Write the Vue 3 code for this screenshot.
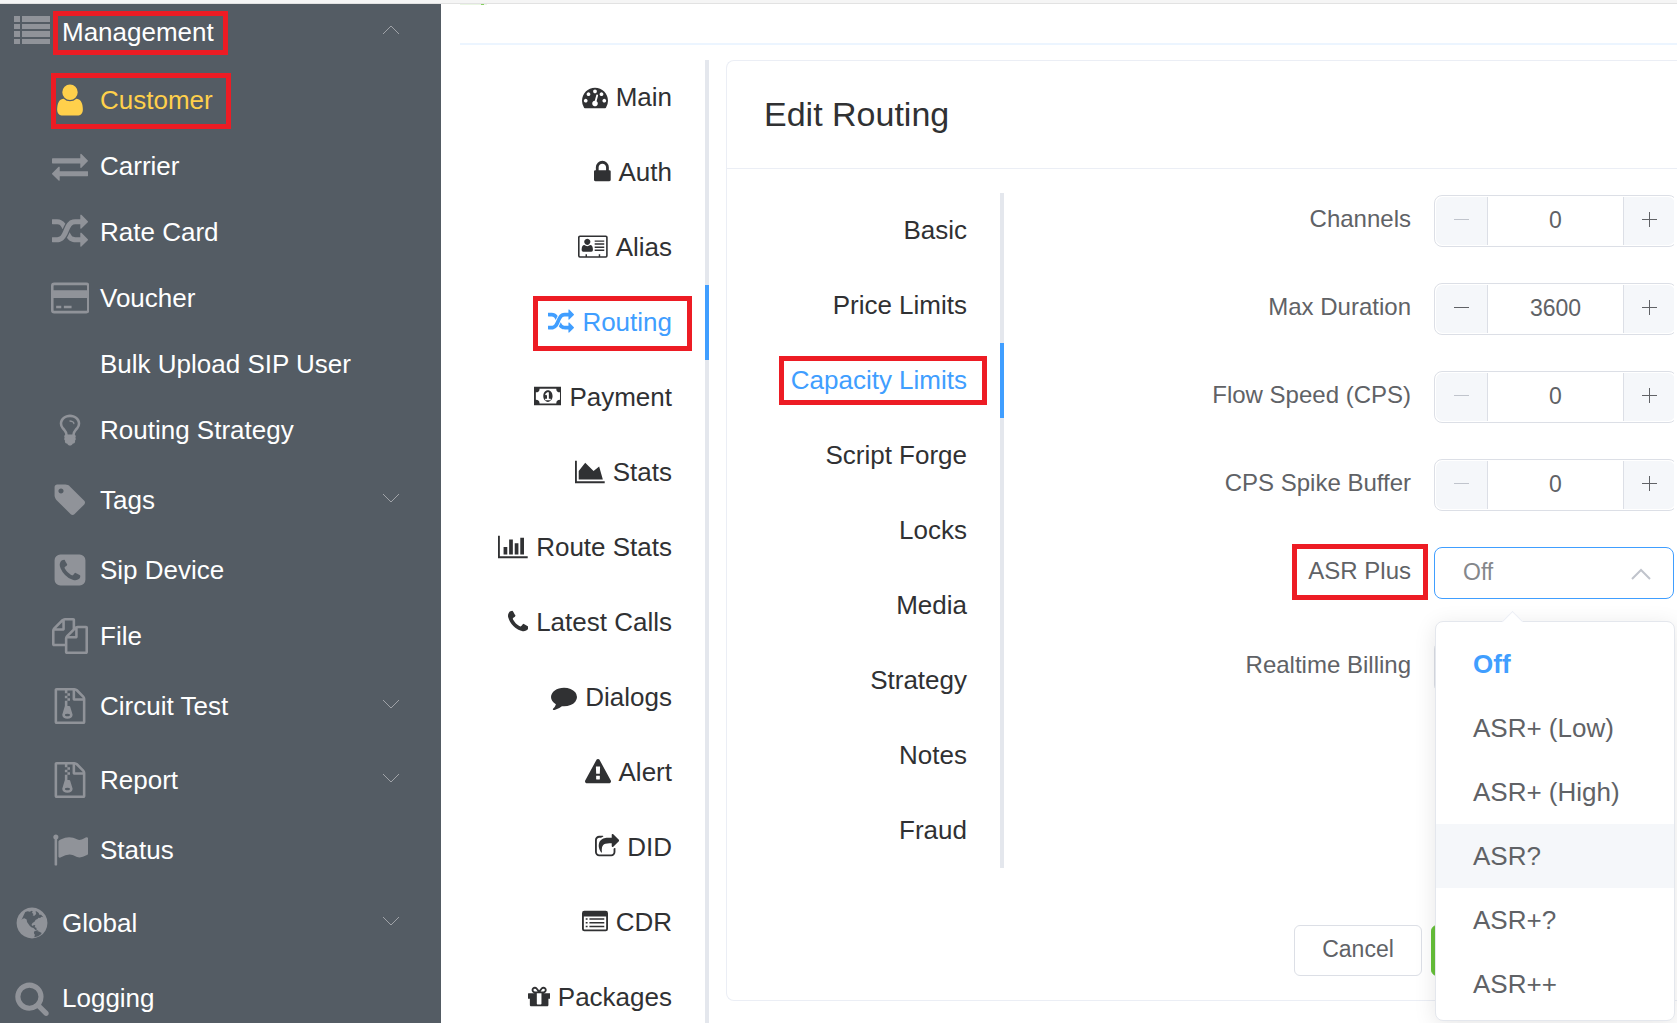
<script setup>
import { ref } from 'vue'

const icons = {
  list: { box: '0 0 36 36', d: 'M0 2h6v6h-6zM8 2h28v6h-28zM0 10h6v5h-6zM8 10h28v5h-28zM0 17h6v6h-6zM8 17h28v6h-28zM0 25h6v5h-6zM8 25h28v5h-28z' },
  user: { box: '0 0 1792 1792', d: 'M1536 1399q0 109-62.5 187t-150.5 78h-854q-88 0-150.5-78t-62.5-187q0-85 8.5-160.5t31.5-152 58.5-131 94-89 134.5-34.5q131 128 313 128t313-128q76 0 134.5 34.5t94 89 58.5 131 31.5 152 8.5 160.5zm-256-887q0 159-112.5 271.5t-271.5 112.5-271.5-112.5-112.5-271.5 112.5-271.5 271.5-112.5 271.5 112.5 112.5 271.5z' },
  exchange: { box: '0 0 1792 1792', d: 'M1792 1184v192q0 13-9.5 22.5t-22.5 9.5h-1376v192q0 13-9.5 22.5t-22.5 9.5q-12 0-24-10l-319-320q-9-9-9-22 0-14 9-23l320-320q9-9 23-9 13 0 22.5 9.5t9.5 22.5v192h1376q13 0 22.5 9.5t9.5 22.5zm0-544q0 14-9 23l-320 320q-9 9-23 9-13 0-22.5-9.5t-9.5-22.5v-192h-1376q-13 0-22.5-9.5t-9.5-22.5v-192q0-13 9.5-22.5t22.5-9.5h1376v-192q0-14 9-23t23-9q12 0 24 10l319 319q9 9 9 23z' },
  random: { box: '0 0 1792 1792', d: 'M666 481q-60 92-137 273-22-45-37-72.5t-40.5-63.5-51-56.5-63-35-81.5-14.5h-224q-14 0-23-9t-9-23v-192q0-14 9-23t23-9h224q250 0 410 225zm1126 799q0 14-9 23l-320 320q-9 9-23 9-13 0-22.5-9.5t-9.5-22.5v-192q-32 0-85 .5t-81 1-73-1-71-5-64-10.5-63-18.5-58-28.5-59-40-55-53.5-56-69.5q59-93 136-273 22 45 37 72.5t40.5 63.5 51 56.5 63 35 81.5 14.5h256v-192q0-14 9-23t23-9q12 0 24 10l319 319q9 9 9 23zm0-896q0 14-9 23l-320 320q-9 9-23 9-13 0-22.5-9.5t-9.5-22.5v-192h-256q-48 0-87 15t-69 45-51 61.5-45 77.5q-32 62-78 171-29 66-49.5 111t-54 105-64 100-74 83-90 68.5-106.5 42-128 16.5h-224q-14 0-23-9t-9-23v-192q0-14 9-23t23-9h224q48 0 87-15t69-45 51-61.5 45-77.5q32-62 78-171 29-66 49.5-111t54-105 64-100 74-83 90-68.5 106.5-42 128-16.5h256v-192q0-14 9-23t23-9q12 0 24 10l319 319q9 9 9 23z' },
  card: { box: '0 0 1920 1792', d: 'M160 128h1600a160 160 0 0 1 160 160v1216a160 160 0 0 1-160 160h-1600a160 160 0 0 1-160-160v-1216a160 160 0 0 1 160-160zM160 256a32 32 0 0 0-32 32v224h1664v-224a32 32 0 0 0-32-32zM128 896v608a32 32 0 0 0 32 32h1600a32 32 0 0 0 32-32v-608zM256 1280h256v128h-256zM640 1280h384v128h-384z' },
  bulb: { box: '0 0 1792 1792', d: 'M1120 576q0 13-9.5 22.5t-22.5 9.5-22.5-9.5-9.5-22.5q0-46-54-71t-106-25q-13 0-22.5-9.5t-9.5-22.5 9.5-22.5 22.5-9.5q50 0 99.5 16t87 54 37.5 90zm160 0q0-72-34.5-134t-90-101.5-123-62-136.5-22.5-136.5 22.5-123 62-90 101.5-34.5 134q0 101 68 180 10 11 30.5 33t30.5 33q128 153 141 298h228q13-145 141-298 10-11 30.5-33t30.5-33q68-79 68-180zm128 0q0 155-103 268-45 49-74.5 87t-59.5 95.5-34 107.5q47 28 47 82 0 37-25 64 25 27 25 64 0 52-45 81 13 23 13 47 0 46-31.5 71t-77.5 25q-20 44-60 70t-87 26-87-26-60-70q-46 0-77.5-25t-31.5-71q0-24 13-47-45-29-45-81 0-37 25-64-25-27-25-64 0-54 47-82-4-50-34-107.5t-59.5-95.5-74.5-87q-103-113-103-268 0-99 44.5-184.5t117-142 164-89 186.5-32.5 186.5 32.5 164 89 117 142 44.5 184.5z' },
  tag: { box: '0 0 1792 1792', d: 'M576 448q0-53-37.5-90.5t-90.5-37.5-90.5 37.5-37.5 90.5 37.5 90.5 90.5 37.5 90.5-37.5 37.5-90.5zm1067 576q0 53-37 90l-491 492q-39 37-91 37-53 0-90-37l-715-716q-38-37-64.5-101t-26.5-117v-416q0-52 38-90t90-38h416q53 0 117 26.5t102 64.5l715 714q37 39 37 91z' },
  phoneSquare: { box: '0 0 1792 1792', d: 'M1408 1193q0-11-2-16t-18-16.5-40.5-25-47.5-26.5-45.5-25-28.5-15q-5-3-19-13t-25-15-21-5q-15 0-36.5 20.5t-39.5 45-38.5 45-33.5 20.5q-7 0-16.5-3.5t-15.5-6.5-17-9.5-14-8.5q-99-55-170-126.5t-127-170.5q-2-3-8.5-14t-9.5-17-6.5-15.5-3.5-16.5q0-13 20.5-33.5t45-38.5 45-39.5 20.5-36.5q0-10-5-21t-15-25-13-19q-3-6-15-28.5t-25-45.5-26.5-47.5-25-40.5-16.5-18-16-2q-48 0-101 22-46 21-80 94.5t-34 130.5q0 16 2.5 34t5 30.5 9 33 10 29.5 12.5 33 11 30q60 164 216.5 320.5t320.5 216.5q6 2 30 11t33 12.5 29.5 10 33 9 30.5 5 34 2.5q57 0 130.5-34t94.5-80q22-53 22-101zm256-777v960q0 119-84.5 203.5t-203.5 84.5h-960q-119 0-203.5-84.5t-84.5-203.5v-960q0-119 84.5-203.5t203.5-84.5h960q119 0 203.5 84.5t84.5 203.5z' },
  files: { box: '0 0 1792 1792', d: 'M1696 384q40 0 68 28t28 68v1216q0 40-28 68t-68 28h-960q-40 0-68-28t-28-68v-288h-544q-40 0-68-28t-28-68v-672q0-40 20-88t48-76l408-408q28-28 76-48t88-20h416q40 0 68 28t28 68v328q68-40 128-40h416zm-544 213l-299 299h299v-299zm-640-384l-299 299h299v-299zm196 647l316-316v-416h-384v416q0 40-28 68t-68 28h-416v640h512v-256q0-40 20-88t48-76zm956 804v-1152h-384v416q0 40-28 68t-68 28h-416v640h896z' },
  archive: { box: '0 0 1792 1792', d: 'M1596 380q28 28 48 76t20 88v1152q0 40-28 68t-68 28h-1344q-40 0-68-28t-28-68v-1600q0-40 28-68t68-28h896q40 0 88 20t76 48zm-444-244v376h376q-10-29-22-41l-313-313q-12-12-41-22zm384 1528v-1024h-416q-40 0-68-28t-28-68v-416h-768v1536h1280zM640 128h128v128h-128zM768 256h128v128h-128zM640 384h128v128h-128zM768 512h128v128h-128zM640 640h128v128h-128zM909 943l107 349q8 27 8 52 0 83-72.5 137.5t-183.5 54.5-183.5-54.5-72.5-137.5q0-25 8-52 21-63 120-396v-128h128v128h79q22 0 39 13t23 34zm-141 465q53 0 90.5-19t37.5-45-37.5-45-90.5-19-90.5 19-37.5 45 37.5 45 90.5 19z' },
  flag: { box: '0 0 1792 1792', d: 'M320 256q0 72-64 110v1266q0 13-9.5 22.5t-22.5 9.5h-64q-13 0-22.5-9.5t-9.5-22.5v-1266q-64-38-64-110 0-53 37.5-90.5t90.5-37.5 90.5 37.5 37.5 90.5zm1472 64v763q0 25-12.5 38.5t-39.5 27.5q-215 116-369 116-61 0-123.5-22t-108.5-48-115.5-48-142.5-22q-192 0-464 146-17 9-33 9-26 0-45-19t-19-45v-742q0-32 31-55 21-14 79-43 236-120 421-120 107 0 200 29t219 88q38 19 88 19 54 0 117.5-21t110-47 88-47 54.5-21q26 0 45 19t19 45z' },
  globe: { box: '0 0 1792 1792', d: 'M896 128a768 768 0 1 0 1 0zM560 350l120-40 110 20 90-40 60 40-50 60 80 60-40 70 90 10 60-60 30-70-50-60 60-30 110 90 30 80 90 0 110 130-90-20-70 60-80-10-50 60-90 40-60 90-100 70-50 90 60 60 60-60 70 20-30 100 80 20 20 110 90 30-40 30-110-50-100-100-110-40-90-90-120-170-20-130-110-60-90 20-60 70zM1000 1320l90-40 150 40 140 70-50 80-130 90-190 40 30-120-50-80z' },
  search: { box: '0 0 1792 1792', d: 'M1216 832q0-185-131.5-316.5t-316.5-131.5-316.5 131.5-131.5 316.5 131.5 316.5 316.5 131.5 316.5-131.5 131.5-316.5zm512 832q0 52-38 90t-90 38q-54 0-90-38l-343-342q-179 124-399 124-143 0-273.5-55.5t-225-150-150-225-55.5-273.5 55.5-273.5 150-225 225-150 273.5-55.5 273.5 55.5 225 150 150 225 55.5 273.5q0 220-124 399l343 343q37 37 37 90z' },
  gauge: { box: '0 0 1792 1792', d: 'M384 1152q0-53-37.5-90.5t-90.5-37.5-90.5 37.5-37.5 90.5 37.5 90.5 90.5 37.5 90.5-37.5 37.5-90.5zm192-448q0-53-37.5-90.5t-90.5-37.5-90.5 37.5-37.5 90.5 37.5 90.5 90.5 37.5 90.5-37.5 37.5-90.5zm428 481l101-382q6-26-7.5-48.5t-38.5-29.5-48 6.5-30 39.5l-101 382q-60 5-107 43.5t-63 98.5q-20 77 20 146t117 89 146-20 89-117q16-60-6-117t-72-91zm660-33q0-53-37.5-90.5t-90.5-37.5-90.5 37.5-37.5 90.5 37.5 90.5 90.5 37.5 90.5-37.5 37.5-90.5zm-640-640q0-53-37.5-90.5t-90.5-37.5-90.5 37.5-37.5 90.5 37.5 90.5 90.5 37.5 90.5-37.5 37.5-90.5zm448 192q0-53-37.5-90.5t-90.5-37.5-90.5 37.5-37.5 90.5 37.5 90.5 90.5 37.5 90.5-37.5 37.5-90.5zm320 448q0 261-141 483-19 29-54 29h-1402q-35 0-54-29-141-221-141-483 0-182 71-348t191-286 286-191 348-71 348 71 286 191 191 286 71 348z' },
  lock: { box: '320 0 1152 1792', d: 'M640 768h512v-192q0-106-75-181t-181-75-181 75-75 181v192zm832 96v576q0 40-28 68t-68 28h-960q-40 0-68-28t-28-68v-576q0-40 28-68t68-28h32v-192q0-184 132-316t316-132 316 132 132 316v192h32q40 0 68 28t28 68z' },
  address: { box: '0 0 2048 1792', d: 'M130 100h1788a130 130 0 0 1 130 130v1276a130 130 0 0 1-130 130h-1788a130 130 0 0 1-130-130v-1276a130 130 0 0 1 130-130zM140 210a30 30 0 0 0-30 30v1256a30 30 0 0 0 30 30h1768a30 30 0 0 0 30-30v-1256a30 30 0 0 0-30-30zM640 330a210 210 0 1 0 1 0zM440 760q90 80 200 80t200-80q190 0 190 340 0 120-110 120h-560q-110 0-110-120 0-340 190-340zM1150 440h660v100h-660zM1150 640h660v100h-660zM1150 860h660v100h-660zM1150 1070h660v100h-660zM520 1400h100v126h-100zM1430 1400h100v126h-100z' },
  money: { box: '0 0 1920 1792', d: 'M0 192h1920v1280h-1920zM384 320a256 256 0 0 1-256 256v512a256 256 0 0 1 256 256h1152a256 256 0 0 1 256-256v-512a256 256 0 0 1-256-256zM960 430c190 0 320 180 320 402s-130 402-320 402-320-180-320-402 130-402 320-402zM768 1024v96h384v-96h-128v-448h-114l-148 137 77 80q42-37 55-57h2v288z' },
  area: { box: '0 0 2048 1792', d: 'M2048 1536v128h-2048v-1536h128v1408h1920zm-384-1024l256 896h-1664v-576l448-576 576 576z' },
  bars: { box: '0 0 2048 1792', d: 'M640 896v512h-256v-512h256zm384-512v1024h-256v-1024h256zm1024 1152v128h-2048v-1536h128v1408h1920zm-640-896v768h-256v-768h256zm384-384v1152h-256v-1152h256z' },
  phone: { box: '192 0 1408 1792', d: 'M1600 1240q0 27-10 70.5t-21 68.5q-21 50-122 106-94 51-186 51-27 0-52.5-3.5t-57.5-12.5-47.5-14.5-55.5-20.5-49-18q-98-35-175-83-128-79-264.5-215.5t-215.5-264.5q-48-77-83-175-3-9-18-49t-20.5-55.5-14.5-47.5-12.5-57.5-3.5-52.5q0-92 51-186 56-101 106-122 25-11 68.5-21t70.5-10q14 0 21 3 18 6 53 76 11 19 30 54t35 63.5 31 53.5q3 4 17.5 25t21.5 35.5 7 28.5q0 20-28.5 50t-62 55-62 53-28.5 46q0 9 5 22.5t8.5 20.5 14 24 11.5 19q76 137 174 235t235 174q2 1 19 11.5t24 14 20.5 8.5 22.5 5q18 0 46-28.5t53-62 55-62 50-28.5q14 0 28.5 7t35.5 21.5 25 17.5q25 15 53.5 31t63.5 35 54 30q70 35 76 53 3 7 3 21z' },
  comment: { box: '0 0 1792 1792', d: 'M1792 896q0 174-120 321.5t-326 233-450 85.5q-70 0-145-8-198 175-460 242-49 14-114 22-17 2-30.5-9t-17.5-29v-1q-3-4-.5-12t2-10 4.5-9.5l6-9 7-8.5 8-9q7-8 31-34.5t34.5-38 31-39.5 32.5-51 27-59 26-76q-157-89-247.5-220t-90.5-281q0-130 71-248.5t191-204.5 286-136.5 348-50.5q244 0 450 85.5t326 233 120 321.5z' },
  warning: { box: '0 0 1792 1792', d: 'M1024 1375v-190q0-14-9.5-23.5t-22.5-9.5h-192q-13 0-22.5 9.5t-9.5 23.5v190q0 14 9.5 23.5t22.5 9.5h192q13 0 22.5-9.5t9.5-23.5zm-2-374l18-459q0-12-10-19-13-11-24-11h-220q-11 0-24 11-10 7-10 21l17 457q0 10 10 16.5t24 6.5h185q14 0 23.5-6.5t10.5-16.5zm-14-934l768 1408q35 63-2 126-17 29-46.5 46t-63.5 17h-1536q-34 0-63.5-17t-46.5-46q-37-63-2-126l768-1408q17-31 47-49t65-18 65 18 47 49z' },
  share: { box: '64 0 1664 1792', d: 'M1472 989v259q0 119-84.5 203.5t-203.5 84.5h-832q-119 0-203.5-84.5t-84.5-203.5v-832q0-119 84.5-203.5t203.5-84.5h255q13 0 22.5 9.5t9.5 22.5q0 27-26 32-77 26-133 60-10 4-16 4h-112q-66 0-113 47t-47 113v832q0 66 47 113t113 47h832q66 0 113-47t47-113v-214q0-19 18-29 28-13 54-37 16-16 35-8 21 9 21 29zm237-496l-384 384q-18 19-45 19-12 0-25-5-39-17-39-59v-192h-160q-323 0-438 131-119 137-74 473 3 23-20 34-8 2-12 2-16 0-26-13-10-14-21-31t-39.5-68.5-49.5-99.5-38.5-114-17.5-122q0-49 3.5-91t14-90 28-88 47-81.5 68.5-74 94.5-61.5 124.5-48.5 159.5-30.5 196.5-11h160v-192q0-42 39-59 13-5 25-5 26 0 45 19l384 384q19 19 19 45t-19 45z' },
  table: { box: '0 0 1792 1792', d: 'M160 128h1472a160 160 0 0 1 160 160v1088a160 160 0 0 1-160 160h-1472a160 160 0 0 1-160-160v-1088a160 160 0 0 1 160-160zM128 512v864a32 32 0 0 0 32 32h1472a32 32 0 0 0 32-32v-864zM256 640h128v100h-128zM512 640h1024v100h-1024zM256 896h128v100h-128zM512 896h1024v100h-1024zM256 1152h128v100h-128zM512 1152h1024v100h-1024z' },
  gift: { box: '128 0 1536 1792', d: 'M1056 1356v-716h-320v716q0 25 18 38.5t46 13.5h192q28 0 46-13.5t18-38.5zm-456-844h195l-126-161q-26-31-69-31-40 0-68 28t-28 68 28 68 68 28zm688-96q0-40-28-68t-68-28q-43 0-69 31l-125 161h194q40 0 68-28t28-68zm376 256v320q0 14-9 23t-23 9h-96v416q0 40-28 68t-68 28h-1088q-40 0-68-28t-28-68v-416h-96q-14 0-23-9t-9-23v-320q0-14 9-23t23-9h440q-93 0-158.5-65.5t-65.5-158.5 65.5-158.5 158.5-65.5q107 0 168 77l128 165 128-165q61-77 168-77 93 0 158.5 65.5t65.5 158.5-65.5 158.5-158.5 65.5h440q14 0 23 9t9 23z' },
}

const managementItems = [
  { label: 'Customer', icon: 'user', active: true },
  { label: 'Carrier', icon: 'exchange' },
  { label: 'Rate Card', icon: 'random' },
  { label: 'Voucher', icon: 'card' },
  { label: 'Bulk Upload SIP User' },
  { label: 'Routing Strategy', icon: 'bulb' },
  { label: 'Tags', icon: 'tag', group: true },
  { label: 'Sip Device', icon: 'phoneSquare' },
  { label: 'File', icon: 'files' },
  { label: 'Circuit Test', icon: 'archive', group: true },
  { label: 'Report', icon: 'archive', group: true },
  { label: 'Status', icon: 'flag' },
]

const customerTabs = [
  { label: 'Main', icon: 'gauge' },
  { label: 'Auth', icon: 'lock' },
  { label: 'Alias', icon: 'address' },
  { label: 'Routing', icon: 'random', active: true },
  { label: 'Payment', icon: 'money' },
  { label: 'Stats', icon: 'area' },
  { label: 'Route Stats', icon: 'bars' },
  { label: 'Latest Calls', icon: 'phone' },
  { label: 'Dialogs', icon: 'comment' },
  { label: 'Alert', icon: 'warning' },
  { label: 'DID', icon: 'share' },
  { label: 'CDR', icon: 'table' },
  { label: 'Packages', icon: 'gift' },
]

const routingTabs = ['Basic', 'Price Limits', 'Capacity Limits', 'Script Forge', 'Locks', 'Media', 'Strategy', 'Notes', 'Fraud']
const activeRoutingTab = 'Capacity Limits'

const limits = ref([
  { id: 'channels', label: 'Channels', value: 0 },
  { id: 'duration', label: 'Max Duration', value: 3600 },
  { id: 'flow', label: 'Flow Speed (CPS)', value: 0 },
  { id: 'spike', label: 'CPS Spike Buffer', value: 0 },
])

const asrOptions = ['Off', 'ASR+ (Low)', 'ASR+ (High)', 'ASR?', 'ASR+?', 'ASR++']
const asr = ref('Off')
const highlighted = ref('ASR?')
</script>

<template>
  <div class="page">
    <div class="topbar"></div>
    <div class="shell">
      <nav class="sidebar">
        <a href="#" class="menu-row menu-first">
          <span class="slot"><svg class="icon" :viewBox="icons.list.box"><path :d="icons.list.d" /></svg></span>
          <span class="text mark mark-management">Management</span>
          <svg class="chevron" viewBox="0 0 18 18"><path d="M1 11l8-8 8 8" /></svg>
        </a>
        <div class="submenu">
          <a
            v-for="item in managementItems"
            :key="item.label"
            href="#"
            class="menu-row sub-row"
            :class="{ group: item.group, active: item.active }"
          >
            <span class="slot">
              <svg v-if="item.icon" class="icon" :viewBox="icons[item.icon].box"><path :d="icons[item.icon].d" fill-rule="evenodd" /></svg>
            </span>
            <span class="text" :class="{ 'mark mark-customer': item.active }">{{ item.label }}</span>
            <svg v-if="item.group" class="chevron" viewBox="0 0 18 18"><path d="M1 3l8 8 8-8" /></svg>
          </a>
        </div>
        <a href="#" class="menu-row">
          <span class="slot"><svg class="icon" :viewBox="icons.globe.box"><path :d="icons.globe.d" fill-rule="evenodd" /></svg></span>
          <span class="text">Global</span>
          <svg class="chevron" viewBox="0 0 18 18"><path d="M1 3l8 8 8-8" /></svg>
        </a>
        <a href="#" class="menu-row">
          <span class="slot"><svg class="icon" :viewBox="icons.search.box"><path :d="icons.search.d" fill-rule="evenodd" /></svg></span>
          <span class="text">Logging</span>
        </a>
      </nav>

      <main class="main">
        <div class="page-head"><span class="status-tag"></span></div>
        <div class="content">
          <nav class="tabs customer-tabs">
            <a v-for="tab in customerTabs" :key="tab.label" href="#" class="tab" :class="{ active: tab.active }">
              <span class="tab-label" :class="{ 'mark mark-routing': tab.active }">
                <svg class="tab-icon" :viewBox="icons[tab.icon].box"><path :d="icons[tab.icon].d" fill-rule="evenodd" /></svg>
                {{ tab.label }}
              </span>
            </a>
          </nav>

          <section class="card">
            <header class="card-head"><h1>Edit Routing</h1></header>
            <div class="card-body">
              <nav class="tabs routing-tabs">
                <a v-for="tab in routingTabs" :key="tab" href="#" class="tab" :class="{ active: tab === activeRoutingTab }">
                  <span class="tab-label" :class="{ 'mark mark-capacity': tab === activeRoutingTab }">{{ tab }}</span>
                </a>
              </nav>

              <form class="form" @submit.prevent>
                <div v-for="field in limits" :key="field.id" class="field">
                  <label :for="field.id">{{ field.label }}</label>
                  <div class="control">
                    <div class="stepper">
                      <button type="button" aria-label="Decrease" :disabled="field.value === 0" @click="field.value--">
                        <svg viewBox="0 0 15 15"><path d="M0 7.5h15" /></svg>
                      </button>
                      <input :id="field.id" v-model.number="field.value" type="text" />
                      <button type="button" aria-label="Increase" @click="field.value++">
                        <svg viewBox="0 0 15 15"><path d="M0 7.5h15M7.5 0v15" /></svg>
                      </button>
                    </div>
                  </div>
                </div>
                <div class="field field-asr">
                  <label for="asr"><span class="mark mark-asr">ASR Plus</span></label>
                  <div class="select-wrap">
                    <select id="asr" v-model="asr" class="select open">
                      <option v-for="option in asrOptions" :key="option">{{ option }}</option>
                    </select>
                    <svg class="select-arrow" viewBox="0 0 20 12"><path d="M1 11l9-9 9 9" /></svg>
                    <ul class="dropdown" role="listbox">
                      <li
                        v-for="option in asrOptions"
                        :key="option"
                        role="option"
                        :aria-selected="option === asr"
                        :class="{ selected: option === asr, hover: option === highlighted }"
                        @mouseenter="highlighted = option"
                        @click="asr = option"
                      >{{ option }}</li>
                    </ul>
                  </div>
                </div>
                <div class="field">
                  <label for="billing">Realtime Billing</label>
                  <select id="billing" class="select"></select>
                </div>
                <div class="actions">
                  <button type="button" class="button">Cancel</button>
                  <button type="submit" class="button primary" aria-label="Save"></button>
                </div>
              </form>
            </div>
          </section>
        </div>
      </main>
    </div>
  </div>
</template>

<style>
body {
  margin: 0;
  background: #fff;
}
</style>

<style scoped>
* {
  box-sizing: border-box;
}

.page {
  height: 100vh;
  display: flex;
  flex-direction: column;
  overflow: hidden;
  font-family: "Liberation Sans", Arial, sans-serif;
  font-size: 26px;
  line-height: 30px;
  color: #303133;
}

a {
  color: inherit;
  text-decoration: none;
}

.topbar {
  flex: none;
  height: 4px;
  background: #f5f5f5;
  border-bottom: 1px solid #e2e2e2;
}

.shell {
  flex: 1;
  min-height: 0;
  display: flex;
}

/* sidebar */
.sidebar {
  flex: none;
  width: 441px;
  overflow: hidden;
  background: #545c64;
  color: #fff;
}

.menu-row {
  display: flex;
  align-items: center;
  gap: 6px;
  height: 75px;
  padding: 0 41px 0 8px;
}

.menu-first {
  height: 56px;
}

.submenu {
  padding: 7px 0 2px;
}

.sub-row {
  height: 66px;
  padding-left: 46px;
}

.sub-row.group {
  height: 74px;
}

.slot {
  flex: none;
  width: 48px;
  display: flex;
  justify-content: center;
}

.icon {
  display: block;
  height: 36px;
  fill: #909399;
}

.sub-row.active {
  color: #ffd04b;
}

.sub-row.active .icon {
  fill: #ffd04b;
}

.chevron {
  width: 18px;
  height: 18px;
  margin-left: auto;
  fill: none;
  stroke: #a0a3a8;
}

/* red annotation frames */
.mark {
  position: relative;
}

.mark::after {
  content: "";
  position: absolute;
  border: 5px solid #ed1c24;
  pointer-events: none;
}

.mark-management::after {
  inset: -6px -14px -8px -9px;
}

.mark-customer::after {
  inset: -12px -18px -14px -49px;
}

.mark-routing::after {
  inset: -11px -20px -14px -15px;
}

.mark-capacity::after {
  inset: -9px -20px -10px -12px;
}

.mark-asr::after {
  inset: -13px -17px -15px -16px;
}

/* main area */
.main {
  flex: 1;
  min-width: 0;
  padding-left: 19px;
}

.page-head {
  height: 41px;
  border-bottom: 2px solid #ecf5ff;
}

.status-tag {
  display: block;
  width: 27px;
  height: 1px;
  background: linear-gradient(to right, #eaf6e4 21px, #85ce61 21px, #85ce61 24px, #eaf6e4 24px);
}

.content {
  display: flex;
  align-items: flex-start;
  gap: 17px;
  padding-top: 15px;
}

.tabs {
  flex: none;
  text-align: right;
}

.customer-tabs {
  width: 249px;
}

.routing-tabs {
  width: 240px;
}

.tab {
  display: flex;
  align-items: center;
  justify-content: flex-end;
  height: 75px;
  padding: 0 33px 2px 0;
  border-right: 4px solid #e4e7ed;
}

.tab.active {
  color: #409eff;
  border-color: #409eff;
}

.tab-label {
  display: flex;
  align-items: center;
  gap: 8px;
  white-space: nowrap;
}

.tab-icon {
  display: block;
  height: 26px;
  fill: currentColor;
}

.card {
  flex: 1;
  min-width: 0;
  border: 1px solid #ebeef5;
  border-right: 0;
  border-radius: 8px 0 0 8px;
}

.card-head {
  padding: 33px 37px 34px;
  border-bottom: 1px solid #ebeef5;
}

h1 {
  margin: 0;
  font-size: 34px;
  font-weight: 400;
  line-height: 40px;
}

.card-body {
  display: flex;
  padding: 24px 3px 24px 37px;
}

.form {
  flex: 1;
  min-width: 0;
  padding-top: 2px;
  color: #606266;
}

.field {
  display: grid;
  grid-template-columns: 1fr 240px;
  column-gap: 23px;
  height: 52px;
  margin-bottom: 36px;
}

.field-asr {
  margin-bottom: 42px;
}

label {
  font-size: 24px;
  line-height: 48px;
  text-align: right;
  white-space: nowrap;
}

.mark-asr {
  display: inline-block;
  line-height: 28px;
}

.control {
  overflow: hidden;
}

.stepper {
  display: flex;
  width: 243px;
  height: 52px;
  padding: 1px;
  border: 1px solid #dcdfe6;
  border-radius: 8px;
}

.stepper button {
  flex: none;
  width: 52px;
  display: grid;
  place-items: center;
  padding: 0 0 3px;
  border: 0;
  border-right: 1px solid #dcdfe6;
  border-radius: 7px 0 0 7px;
  background: #f5f7fa;
}

.stepper button:last-child {
  border-right: 0;
  border-left: 1px solid #dcdfe6;
  border-radius: 0 7px 7px 0;
}

.stepper svg {
  width: 15px;
  height: 15px;
  fill: none;
  stroke: #606266;
}

.stepper button:disabled svg {
  stroke: #c0c4cc;
}

.stepper input {
  flex: 1;
  min-width: 0;
  padding: 0 0 2px;
  border: 0;
  outline: 0;
  background: none;
  font: inherit;
  font-size: 23px;
  color: inherit;
  text-align: center;
}

.select-wrap {
  position: relative;
}

.select {
  appearance: none;
  display: block;
  width: 100%;
  height: 52px;
  padding: 0 60px 2px 28px;
  border: 1px solid #dcdfe6;
  border-radius: 8px;
  outline: 0;
  background: #fff;
  font: inherit;
  font-size: 23px;
  color: #85878b;
}

.select.open {
  border-color: #409eff;
}

.select-arrow {
  position: absolute;
  top: 21px;
  right: 23px;
  width: 20px;
  height: 12px;
  fill: none;
  stroke: #c0c4cc;
  stroke-width: 2;
  pointer-events: none;
}

.dropdown {
  position: absolute;
  z-index: 2;
  top: 74px;
  left: 1px;
  width: 240px;
  margin: 0;
  padding: 10px 0 4px;
  border: 1px solid #e4e7ed;
  border-radius: 8px;
  background: #fff;
  box-shadow: 0 4px 22px rgba(0, 0, 0, 0.1);
  list-style: none;
}

.dropdown::before {
  content: "";
  position: absolute;
  top: -8px;
  left: 69px;
  width: 14px;
  height: 14px;
  border: 1px solid #ebeef5;
  border-right: 0;
  border-bottom: 0;
  background: #fff;
  transform: rotate(45deg);
}

.dropdown li {
  padding: 0 37px;
  line-height: 64px;
  white-space: nowrap;
}

.dropdown .selected {
  color: #409eff;
  font-weight: 700;
}

.dropdown .hover {
  background: #f5f7fa;
}

.actions {
  display: flex;
  justify-content: flex-end;
  gap: 9px;
  padding: 196px 123px 0 0;
}

.button {
  width: 128px;
  height: 51px;
  padding: 0 0 3px;
  border: 1px solid #dcdfe6;
  border-radius: 6px;
  background: #fff;
  font: inherit;
  font-size: 23px;
  color: #606266;
}

.primary {
  width: 120px;
  border-color: #67c23a;
  background: #67c23a;
}
</style>
